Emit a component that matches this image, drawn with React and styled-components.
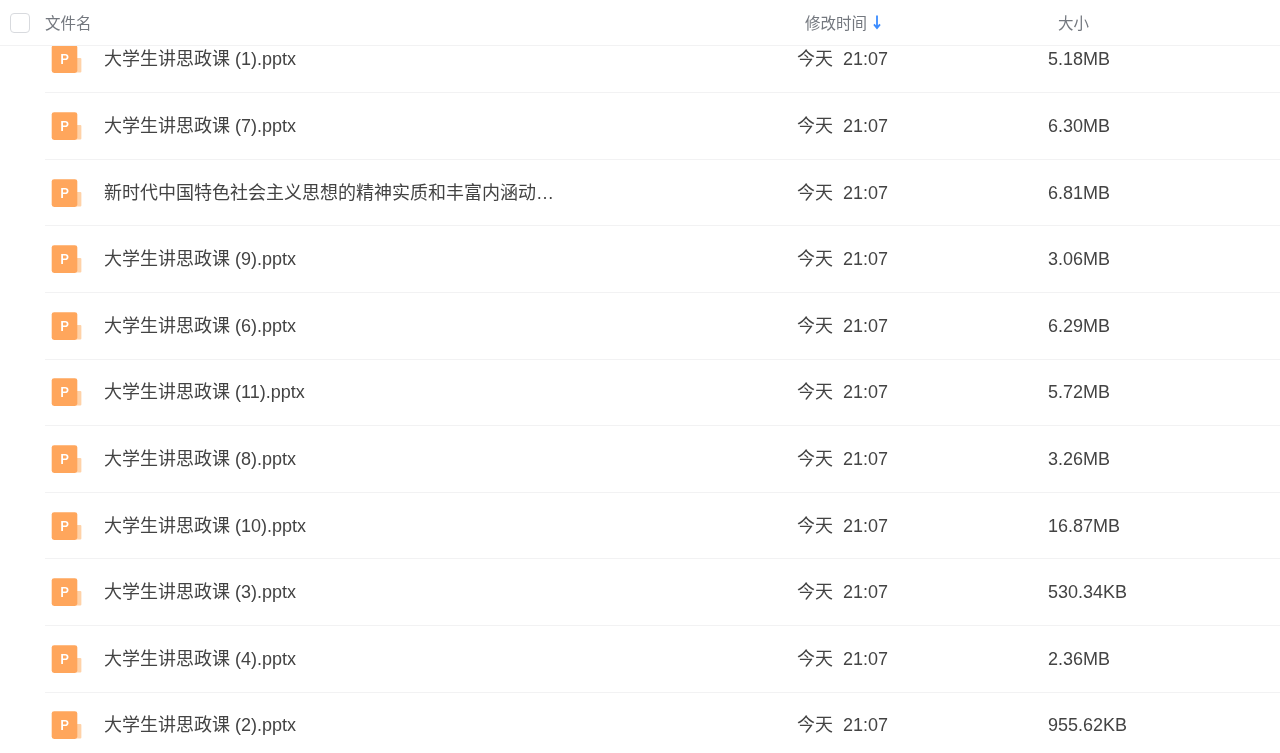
import React from "react";
import styled, { createGlobalStyle } from "styled-components";

const files = [
  { name: "大学生讲思政课 (1).pptx", size: "5.18MB" },
  { name: "大学生讲思政课 (7).pptx", size: "6.30MB" },
  { name: "新时代中国特色社会主义思想的精神实质和丰富内涵动…", size: "6.81MB" },
  { name: "大学生讲思政课 (9).pptx", size: "3.06MB" },
  { name: "大学生讲思政课 (6).pptx", size: "6.29MB" },
  { name: "大学生讲思政课 (11).pptx", size: "5.72MB" },
  { name: "大学生讲思政课 (8).pptx", size: "3.26MB" },
  { name: "大学生讲思政课 (10).pptx", size: "16.87MB" },
  { name: "大学生讲思政课 (3).pptx", size: "530.34KB" },
  { name: "大学生讲思政课 (4).pptx", size: "2.36MB" },
  { name: "大学生讲思政课 (2).pptx", size: "955.62KB" },
];

const PptIcon = () => (
  <svg width="31" height="29" viewBox="0 0 31 29">
    <path d="M26 13h3.3a1.1 1.1 0 0 1 1.1 1.1v12.3a1.1 1.1 0 0 1-1.1 1.1H24z" fill="#ffd2a8" />
    <rect x="0.7" y="0.2" width="25.6" height="27.7" rx="2.4" fill="#ffa65c" />
    <path d="M10.2 19V9h3.9c2.2 0 3.4 1.1 3.4 3s-1.2 3.1-3.4 3.1H12V19zM12 13.6h2c1.1 0 1.7-.6 1.7-1.6s-.6-1.5-1.7-1.5h-2z" fill="#fff" />
  </svg>
);

const App = () => {
  return (
    <Page>
      <GlobalStyle />
      <Header>
        <CheckBox />
        <NameHead>文件名</NameHead>
        <TimeHead>
          修改时间
          <SortArrow viewBox="0 0 10 16" width="10" height="16">
            <path d="M5 1.5v12.5M2 10.4 5 14l3-3.6" fill="none" stroke="#3b8cff" strokeWidth="1.8" />
          </SortArrow>
        </TimeHead>
        <SizeHead>大小</SizeHead>
      </Header>
      <List>
        <Scroller>
          {files.map((file) => (
            <Row key={file.name}>
              <IconCell>
                <PptIcon />
              </IconCell>
              <FileName>{file.name}</FileName>
              <Time>今天&nbsp;&nbsp;21:07</Time>
              <Size>{file.size}</Size>
            </Row>
          ))}
        </Scroller>
      </List>
    </Page>
  );
};
export default App;

const GlobalStyle = createGlobalStyle`
  html, body {
    margin: 0;
    padding: 0;
    background: #fff;
    overflow: hidden;
  }
`;

const Page = styled.div`
  width: 1280px;
  height: 753px;
  overflow: hidden;
  display: flex;
  flex-direction: column;
  font-family: "Liberation Sans", "Noto Sans CJK SC", Arial, sans-serif;
  color: #454d5a;
  filter: blur(0.3px);
`;

const Header = styled.div`
  flex: none;
  height: 46px;
  box-sizing: border-box;
  padding-bottom: 1px;
  display: flex;
  align-items: center;
  border-bottom: 1px solid #f2f2f3;
  font-size: 15.5px;
  color: #74787f;
`;

const CheckBox = styled.span`
  flex: none;
  width: 20px;
  height: 20px;
  margin: 1px 0 0 10px;
  box-sizing: border-box;
  border: 1px solid #d8dade;
  border-radius: 4px;
  background: #fff;
`;

const NameHead = styled.div`
  margin-left: 15px;
  width: 760px;
`;

const TimeHead = styled.div`
  width: 253px;
  display: flex;
  align-items: center;
  gap: 5px;
`;

const SortArrow = styled.svg`
  flex: none;
`;

const SizeHead = styled.div``;

const List = styled.div`
  flex: 1;
  min-height: 0;
  overflow: hidden;
`;

const Scroller = styled.div`
  margin-top: -19.4px;
  padding-left: 45px;
`;

const Row = styled.div`
  height: 66.6px;
  box-sizing: border-box;
  padding-top: 20.8px;
  display: flex;
  align-items: baseline;
  border-bottom: 1px solid #f2f2f3;
  font-size: 18px;
  line-height: 24px;
  color: #434343;
`;

const IconCell = styled.div`
  flex: none;
  align-self: flex-start;
  width: 59px;
  margin-top: -2px;
  padding-left: 6px;
  box-sizing: border-box;
  display: flex;
`;

const FileName = styled.div`
  width: 693px;
`;

const Time = styled.div`
  width: 251px;
`;

const Size = styled.div``;
